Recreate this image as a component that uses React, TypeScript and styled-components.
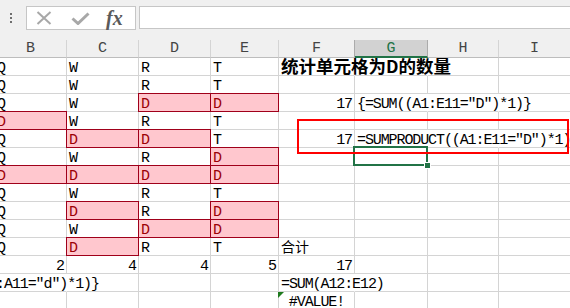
import React from "react"
import styled, { createGlobalStyle, css } from "styled-components"

const GlobalStyle = createGlobalStyle`
  html, body {
    margin: 0;
    padding: 0;
    background: #ffffff;
  }
  body {
    font-family: "Liberation Mono", "Noto Sans CJK SC", monospace;
  }
`

const COLS = [72, 72, 72, 72, 68, 76, 73, 71, 72]
const LETTERS = ["A", "B", "C", "D", "E", "F", "G", "H", "I"]
const ACTIVE_COL = 6

type Variant = "mono" | "title" | "cjk"
type CellData = {
  t?: string
  bad?: boolean
  align?: "left" | "right" | "center"
  variant?: Variant
  open?: boolean
  selected?: boolean
  flag?: boolean
}

// "D*" means a highlighted (conditional format) cell
const qwrt = (b: string, c: string, d: string, e: string): CellData[] =>
  [b, c, d, e].map(v =>
    v.endsWith("*") ? { t: v.slice(0, -1), bad: true } : { t: v }
  )

const rows: CellData[][] = [
  [{}, ...qwrt("Q", "W", "R", "T"), { t: "统计单元格为D的数量", variant: "title", open: true }, { open: true }, {}, {}],
  [{}, ...qwrt("Q", "W", "R", "T"), {}, {}, {}, {}],
  [{}, ...qwrt("Q", "W", "D*", "D*"), { t: "17", align: "right" }, { t: '{=SUM((A1:E11="D")*1)}', open: true }, { open: true }, {}],
  [{}, ...qwrt("D*", "W", "R", "T"), {}, {}, {}, {}],
  [{}, ...qwrt("Q", "D*", "D*", "T"), { t: "17", align: "right" }, { t: '=SUMPRODUCT((A1:E11="D")*1)', open: true }, { open: true }, {}],
  [{}, ...qwrt("Q", "W", "R", "D*"), {}, { selected: true }, {}, {}],
  [{}, ...qwrt("D*", "D*", "D*", "D*"), {}, {}, {}, {}],
  [{}, ...qwrt("Q", "W", "R", "T"), {}, {}, {}, {}],
  [{}, ...qwrt("Q", "D*", "R", "D*"), {}, {}, {}, {}],
  [{}, ...qwrt("Q", "W", "D*", "D*"), {}, {}, {}, {}],
  [{}, ...qwrt("Q", "D*", "R", "T"), { t: "合计", variant: "cjk" }, {}, {}, {}],
  [
    {},
    { t: "2", align: "right" },
    { t: "4", align: "right" },
    { t: "4", align: "right" },
    { t: "5", align: "right" },
    { t: "17", align: "right" },
    {},
    {},
    {},
  ],
  [{ t: '{=SUM((A1:A11="d")*1)}', open: true }, { open: true }, {}, {}, {}, { t: "=SUM(A12:E12)", open: true }, {}, {}, {}],
  [{}, {}, {}, {}, {}, { t: "#VALUE!", align: "center", flag: true }, {}, {}, {}],
  [{}, {}, {}, {}, {}, {}, {}, {}, {}],
]

const App: React.FC = () => {
  return (
    <Page>
      <GlobalStyle />
      <Toolbar>
        <Grip>
          <Dot />
          <Dot />
          <Dot />
        </Grip>
        <FuncBox>
          <CancelIcon width="16" height="14" viewBox="0 0 16 14">
            <path d="M1.5 1 L14.5 13 M14.5 1 L1.5 13" />
          </CancelIcon>
          <EnterIcon width="19" height="13" viewBox="0 0 19 13">
            <path d="M1.5 6.5 L7 11.5 L17.5 1.5" />
          </EnterIcon>
          <Fx>fx</Fx>
        </FuncBox>
        <FormulaInput />
      </Toolbar>

      <Sheet>
        {LETTERS.map((l, i) => (
          <ColHead key={l} $active={i === ACTIVE_COL}>
            {l}
          </ColHead>
        ))}
        {rows.map((row, r) =>
          row.map((cell, c) => (
            <Cell
              key={`${r}-${c}`}
              $bad={cell.bad}
              $align={cell.align || "left"}
              $variant={cell.variant || "mono"}
              $open={cell.open}
              $selected={cell.selected}
              $flag={cell.flag}
            >
              {cell.t}
            </Cell>
          ))
        )}
        <Annotation />
      </Sheet>
    </Page>
  )
}

const Page = styled.div`
  width: 570px;
  height: 308px;
  overflow: hidden;
  background: #ffffff;
`

const Toolbar = styled.div`
  height: 40px;
  box-sizing: border-box;
  padding-top: 6px;
  background: #f0f0f0;
  display: flex;
  align-items: flex-start;
`

const Grip = styled.div`
  margin: 7px 0 0 10px;
  display: flex;
  flex-direction: column;
  gap: 2px;
`

const Dot = styled.span`
  width: 2px;
  height: 2px;
  background: #6e6e6e;
`

const FuncBox = styled.div`
  margin-left: 14px;
  width: 110px;
  height: 24px;
  box-sizing: border-box;
  border: 1px solid #c6c6c6;
  background: #ffffff;
  display: flex;
  align-items: center;
`

const CancelIcon = styled.svg`
  margin-left: 9px;
  fill: none;
  stroke: #a8a8a8;
  stroke-width: 2;
`

const EnterIcon = styled.svg`
  margin-left: 19px;
  margin-top: 1px;
  fill: none;
  stroke: #a8a8a8;
  stroke-width: 3;
`

const Fx = styled.span`
  margin-left: 16px;
  font-family: "Liberation Serif", serif;
  font-style: italic;
  font-weight: 700;
  font-size: 20px;
  line-height: 20px;
  color: #5a5a5a;
`

const FormulaInput = styled.div`
  margin-left: 3px;
  flex: 1;
  height: 23px;
  box-sizing: border-box;
  border: 1px solid #c6c6c6;
  border-right: none;
  background: #ffffff;
`

const Sheet = styled.div`
  position: relative;
  margin-left: -77px;
  display: grid;
  grid-template-columns: ${COLS.map(w => `${w}px`).join(" ")};
  grid-auto-rows: 18px;
`

const ColHead = styled.div<{ $active?: boolean }>`
  box-sizing: border-box;
  background: ${p => (p.$active ? "#d2d2d2" : "#f0f0f0")};
  border-right: 1px solid ${p => (p.$active ? "#ababab" : "#d4d4d4")};
  border-bottom: ${p => (p.$active ? "2px solid #217346" : "1px solid #bdbdbd")};
  box-shadow: ${p => (p.$active ? "-1px 0 0 #ababab" : "none")};
  color: ${p => (p.$active ? "#217346" : "#444444")};
  text-align: center;
  font-size: 15px;
  line-height: 18px;
  padding-top: 0;
`

const variantStyles = {
  mono: css`
    font-size: 15px;
    line-height: 18px;
    letter-spacing: -1.1px;
    padding: 2px 2px 0 2px;
  `,
  title: css`
    font-family: "Noto Sans CJK SC", sans-serif;
    font-weight: 700;
    font-size: 17.5px;
    line-height: 15px;
    padding: 0 0 0 2px;
  `,
  cjk: css`
    font-family: "Noto Sans CJK SC", sans-serif;
    font-size: 14px;
    line-height: 16px;
    padding: 0 0 0 2px;
  `,
}

const Cell = styled.div<{
  $bad?: boolean
  $align: "left" | "right" | "center"
  $variant: Variant
  $open?: boolean
  $selected?: boolean
  $flag?: boolean
}>`
  box-sizing: border-box;
  min-width: 0;
  white-space: nowrap;
  border-right: 1px solid ${p => (p.$open ? "transparent" : "#d4d4d4")};
  border-bottom: 1px solid #d4d4d4;
  text-align: ${p => p.$align};
  color: ${p => (p.$bad ? "#9c0006" : "#000000")};
  background: ${p => (p.$bad ? "#ffc7ce" : "transparent")};
  ${p => variantStyles[p.$variant]}
  ${p => p.$align === "center" && "padding-left: 0; padding-right: 0;"}

  ${p =>
    p.$bad &&
    css`
      position: relative;
      &::after {
        content: "";
        position: absolute;
        inset: -1px;
        border: 1px solid #a0001a;
        z-index: 1;
        pointer-events: none;
      }
    `}

  ${p =>
    p.$selected &&
    css`
      position: relative;
      &::before {
        content: "";
        position: absolute;
        left: -2px;
        top: -2px;
        right: -1px;
        bottom: -1px;
        border: 2px solid #217346;
        z-index: 2;
      }
      &::after {
        content: "";
        position: absolute;
        right: -4px;
        bottom: -4px;
        width: 5px;
        height: 5px;
        background: #217346;
        border: 1px solid #ffffff;
        z-index: 3;
      }
    `}

  ${p =>
    p.$flag &&
    css`
      position: relative;
      &::before {
        content: "";
        position: absolute;
        left: -1px;
        top: 0;
        width: 0;
        height: 0;
        border-top: 6px solid #1e7a1e;
        border-right: 6px solid transparent;
      }
    `}
`

const Annotation = styled.div`
  position: absolute;
  left: 374px;
  top: 79px;
  width: 272px;
  height: 35px;
  box-sizing: border-box;
  border: 2px solid #ff0000;
  z-index: 4;
  pointer-events: none;
`

export default App
